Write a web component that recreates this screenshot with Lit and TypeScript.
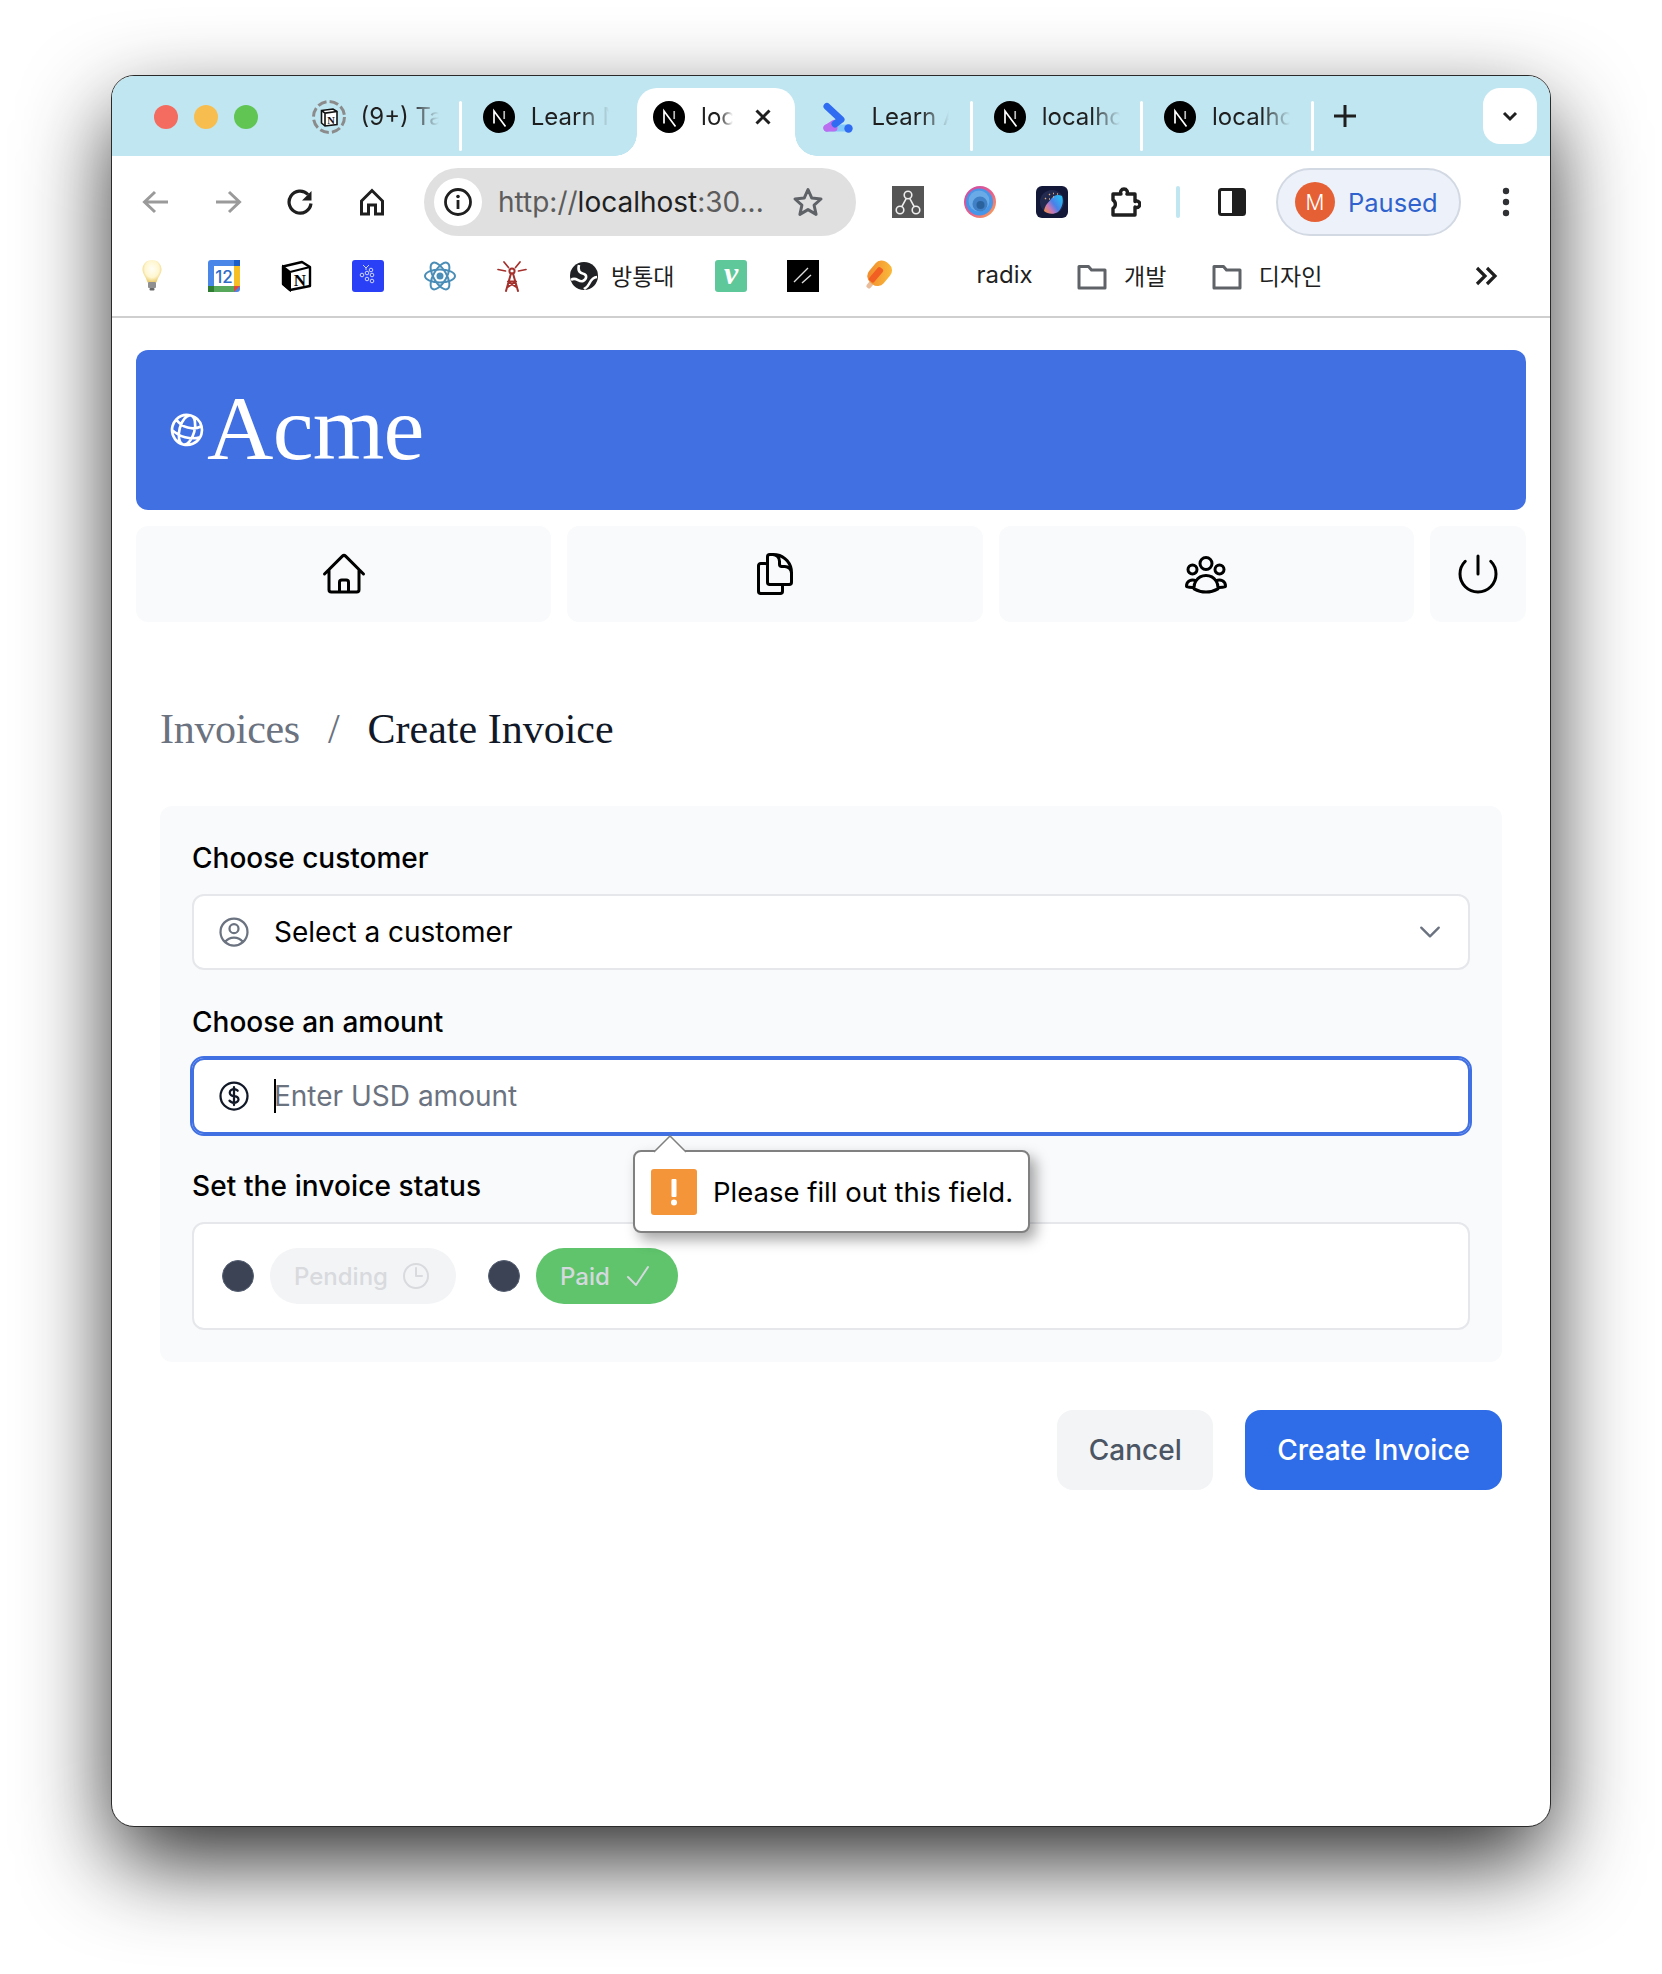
import { LitElement, html, css, svg } from "lit";
import { customElement } from "lit/decorators.js";

const icon = (size: number, box: number, body: unknown, cls = "") => html`
  <svg class=${cls} width=${size} height=${size} viewBox="0 0 ${box} ${box}" fill="none">${body}</svg>
`;

// Heroicons outline, drawn on a 24 grid
const hero = (size: number, d: string, color: string, width = 1.5) =>
  icon(size, 24, svg`<path d=${d} stroke=${color} stroke-width=${width} stroke-linecap="round" stroke-linejoin="round"/>`);

const HOME = "m2.25 12 8.954-8.955c.44-.439 1.152-.439 1.591 0L21.75 12M4.5 9.75v10.125c0 .621.504 1.125 1.125 1.125H9.75v-4.875c0-.621.504-1.125 1.125-1.125h2.25c.621 0 1.125.504 1.125 1.125V21h4.125c.621 0 1.125-.504 1.125-1.125V9.75M8.25 21h8.25";
const DOCS = "M15.75 17.25v3.375c0 .621-.504 1.125-1.125 1.125h-9.75a1.125 1.125 0 0 1-1.125-1.125V7.875c0-.621.504-1.125 1.125-1.125H6.75a9.06 9.06 0 0 1 1.5.124m7.5 10.376h3.375c.621 0 1.125-.504 1.125-1.125V11.25c0-4.46-3.243-8.161-7.5-8.876a9.06 9.06 0 0 0-1.5-.124H9.375c-.621 0-1.125.504-1.125 1.125v3.5m7.5 10.375H9.375a1.125 1.125 0 0 1-1.125-1.125v-9.25m12 6.625v-1.875a3.375 3.375 0 0 0-3.375-3.375h-1.5a1.125 1.125 0 0 1-1.125-1.125v-1.5a3.375 3.375 0 0 0-3.375-3.375H9.75";
const USERS = "M18 18.72a9.094 9.094 0 0 0 3.741-.479 3 3 0 0 0-4.682-2.72m.94 3.198.001.031c0 .225-.012.447-.037.666A11.944 11.944 0 0 1 12 21c-2.17 0-4.207-.576-5.963-1.584A6.062 6.062 0 0 1 6 18.719m12 0a5.971 5.971 0 0 0-.941-3.197m0 0A5.995 5.995 0 0 0 12 12.75a5.995 5.995 0 0 0-5.058 2.772m0 0a3 3 0 0 0-4.681 2.72 8.986 8.986 0 0 0 3.74.477m.94-3.197a5.971 5.971 0 0 0-.94 3.197M15 6.75a3 3 0 1 1-6 0 3 3 0 0 1 6 0Zm6 3a2.25 2.25 0 1 1-4.5 0 2.25 2.25 0 0 1 4.5 0Zm-13.5 0a2.25 2.25 0 1 1-4.5 0 2.25 2.25 0 0 1 4.5 0Z";
const POWER = "M5.636 5.636a9 9 0 1 0 12.728 0M12 3v9";
const USER_CIRCLE = "M17.982 18.725A7.488 7.488 0 0 0 12 15.75a7.488 7.488 0 0 0-5.982 2.975m11.963 0a9 9 0 1 0-11.963 0m11.963 0A8.966 8.966 0 0 1 12 21a8.966 8.966 0 0 1-5.982-2.275M15 9.75a3 3 0 1 1-6 0 3 3 0 0 1 6 0Z";
const DOLLAR = "M12 6v12m-3-2.818.879.659c1.171.879 3.07.879 4.242 0 1.172-.879 1.172-2.303 0-3.182C13.536 12.219 12.768 12 12 12c-.725 0-1.45-.22-2.003-.659-1.106-.879-1.106-2.303 0-3.182s2.9-.879 4.006 0l.415.33M21 12a9 9 0 1 1-18 0 9 9 0 0 1 18 0Z";
const GLOBE = "M12 21a9.004 9.004 0 0 0 8.716-6.747M12 21a9.004 9.004 0 0 1-8.716-6.747M12 21c2.485 0 4.5-4.03 4.5-9S14.485 3 12 3m0 18c-2.485 0-4.5-4.03-4.5-9S9.515 3 12 3m0 0a8.997 8.997 0 0 1 7.843 4.582M12 3a8.997 8.997 0 0 0-7.843 4.582m15.686 0A11.953 11.953 0 0 1 12 10.5c-2.998 0-5.74-1.1-7.843-2.918m15.686 0A8.959 8.959 0 0 1 21 12c0 .778-.099 1.533-.284 2.253m0 0A17.919 17.919 0 0 1 12 16.5c-3.162 0-6.133-.815-8.716-2.247m0 0A9.004 9.004 0 0 1 3 12c0-1.605.42-3.113 1.157-4.418";
const CHEVRON = "m19.5 8.25-7.5 7.5-7.5-7.5";
const CLOCK = "M12 6v6h4.5m4.5 0a9 9 0 1 1-18 0 9 9 0 0 1 18 0Z";
const CHECK = "m4.5 12.75 6 6 9-13.5";

const nextFav = icon(32, 32, svg`
  <circle cx="16" cy="16" r="16" fill="#000"/>
  <path d="M11 22.5V10l11.5 15.5" stroke="#fff" stroke-width="1.7"/>
  <path d="M21.2 10v8" stroke="#bbb" stroke-width="1.7"/>`);

const notionRingFav = icon(36, 36, svg`
  <circle cx="18" cy="18" r="15.5" stroke="#8b8b8b" stroke-width="3" stroke-dasharray="9 3.2"/>
  <path d="M10.5 11.5 22 10l4 2.5v13L14 27l-3.5-3z" fill="#fff" stroke="#111" stroke-width="1.6"/>
  <path d="M10.5 11.5l3.5 2.6V27M14 14.1l12-1.6" stroke="#111" stroke-width="1.6"/>
  <text x="20" y="24.5" font-size="10.5" font-weight="700" font-family="Liberation Serif, serif" text-anchor="middle" fill="#111">N</text>`);

const learnFav = icon(32, 32, svg`
  <path d="M4 27H25" stroke="#82c8fb" stroke-width="7" stroke-linecap="round"/>
  <path d="M4 27H11" stroke="#bb6df0" stroke-width="7" stroke-linecap="round"/>
  <path d="M4 27 11 22.5" stroke="#bb6df0" stroke-width="7" stroke-linecap="round"/>
  <path d="M4 5.5 18 18.5 12 23" stroke="#2f6cf2" stroke-width="7" stroke-linecap="round" stroke-linejoin="round"/>
  <circle cx="25.5" cy="27.5" r="4.2" fill="#2f6cf2"/>`);

const graphExt = icon(32, 32, svg`
  <rect width="32" height="32" fill="#555"/>
  <circle cx="16" cy="9" r="3.8" stroke="#eee" stroke-width="1.6"/>
  <circle cx="8" cy="24" r="3.8" stroke="#eee" stroke-width="1.6"/>
  <circle cx="24" cy="24" r="3.8" stroke="#eee" stroke-width="1.6"/>
  <path d="M14.3 12.4 9.8 20.6M17.7 12.4l4.5 8.2" stroke="#eee" stroke-width="1.6"/>`);

const orbExt = icon(32, 32, svg`
  <defs><linearGradient id="orb" x1="0" y1="0" x2="1" y2="1">
    <stop offset="0" stop-color="#c84aa8"/><stop offset=".55" stop-color="#e8608a"/><stop offset="1" stop-color="#f8b050"/>
  </linearGradient></defs>
  <circle cx="16" cy="16" r="16" fill="url(#orb)"/>
  <circle cx="15.5" cy="16" r="13.5" fill="#4595e8"/>
  <circle cx="15" cy="15" r="10.5" fill="#6aaae6"/>
  <circle cx="16" cy="18" r="7.5" fill="#3f80c6"/>
  <circle cx="16.5" cy="19" r="4" fill="#2a629e"/>`);

const waveExt = icon(32, 32, svg`
  <defs><linearGradient id="wave" x1="0" y1="1" x2="1" y2=".3">
    <stop offset="0" stop-color="#f0922c"/><stop offset=".35" stop-color="#c878b8"/><stop offset=".6" stop-color="#4a80e8"/><stop offset="1" stop-color="#2ab8f0"/>
  </linearGradient></defs>
  <rect width="32" height="32" rx="6" fill="#141838"/>
  <circle cx="16" cy="16" r="12" fill="#232a50"/>
  <path d="M8 25c1-6 4-8 7-12s7-5 11-3c2 6 0 12-4 16-5 3-10 2-14-1z" fill="url(#wave)"/>
  <path d="M9 13l1-1M13 9l1-1M17 7.500l1 0M13 13l1 0M17 11l1 0M21 8l1 0" stroke="#e0a878" stroke-width="1.300"/>`);

const puzzle = icon(32, 32, svg`
  <path d="M4 8h8a3.400 3.400 0 1 1 6 0h8v7.500a3.200 3.200 0 1 1 0 5.500V29H4v-6.500a5 5 0 0 0 0-8.500z"
    stroke="#1f1f1f" stroke-width="3.400" stroke-linejoin="round"/>`);

const sidePanel = icon(32, 32, svg`
  <rect x="3.5" y="3.5" width="25" height="25" rx="2" fill="#fff" stroke="#1f1f1f" stroke-width="3"/>
  <rect x="16" y="3.5" width="12.5" height="25" fill="#1f1f1f"/>`);

const bulb = icon(32, 32, svg`
  <defs><radialGradient id="glow" cx=".5" cy=".4" r=".58">
    <stop offset="0" stop-color="#fffef6"/><stop offset=".65" stop-color="#fff6cf"/><stop offset="1" stop-color="#eacd72"/>
  </radialGradient></defs>
  <path d="M16 0c5.500 0 9.500 4.200 9.500 9.500 0 4.500-3.500 7-5 13h-9c-1.500-6-5-8.500-5-13C6.500 4.200 10.500 0 16 0z" fill="url(#glow)"/>
  <rect x="12" y="22" width="8" height="6" rx="1" fill="#8f8f8f"/>
  <rect x="13.500" y="28" width="5" height="2.500" rx="1" fill="#666"/>`);

const calendar = icon(32, 32, svg`
  <rect width="32" height="32" rx="3" fill="#4a86e8"/>
  <rect x="26" width="6" height="6" fill="#1c5ec8"/>
  <rect x="26" y="6" width="6" height="20" fill="#f6bf26"/>
  <rect x="6" y="26" width="20" height="6" fill="#57a85a"/>
  <rect y="26" width="6" height="6" fill="#2e7d32"/>
  <path d="M26 26h6l-6 6z" fill="#e04a3a"/>
  <rect x="6" y="6" width="20" height="20" fill="#fff"/>
  <text x="16" y="22.500" font-size="17" font-family="Inter, sans-serif" font-weight="500" text-anchor="middle" fill="#2f6cc8">12</text>`);

const notion = icon(32, 32, svg`
  <path d="M3 6.500 22 2l8 5v19l-20 4-7-6z" fill="#fff" stroke="#000" stroke-width="2.400" stroke-linejoin="round"/>
  <path d="M3 6.500l7 5.500v18l-7-6zM10 12l20-5" fill="#000" stroke="#000" stroke-width="2"/>
  <text x="20" y="26" font-size="17" font-weight="700" font-family="Liberation Serif, serif" text-anchor="middle" fill="#000">N</text>`);

const grapes = icon(32, 32, svg`
  <rect width="32" height="32" rx="3" fill="#2a40f6"/>
  <g stroke="#dfe4ff" stroke-width=".9">
    <circle cx="10" cy="15" r="1.800"/><circle cx="19" cy="10" r="1.800"/><circle cx="20" cy="15" r="1.800"/>
    <circle cx="15" cy="13" r="1.800"/><circle cx="15" cy="19" r="1.800"/><circle cx="20" cy="21" r="1.800"/>
    <path d="M11 5l3 3 3-3M14 8v2"/>
  </g>`);

const atom = icon(32, 32, svg`
  <g stroke="#4a8db7" stroke-width="2">
    <ellipse cx="16" cy="16" rx="15" ry="6.500"/>
    <ellipse cx="16" cy="16" rx="15" ry="6.500" transform="rotate(60 16 16)"/>
    <ellipse cx="16" cy="16" rx="15" ry="6.500" transform="rotate(120 16 16)"/>
  </g>
  <circle cx="16" cy="16" r="3.500" fill="#4a8db7"/>`);

const tower = icon(32, 32, svg`
  <g stroke="#a4302c" stroke-width="2" stroke-linecap="round">
    <circle cx="16" cy="11" r="2.600"/>
    <path d="M15 13.500 10 31M17 13.500 22 31M12.500 21.500h7M11 27.500l9-6M21 27.500l-9-6"/>
    <path d="M8 2l4.500 5.500M24 2l-4.500 5.500M2 9.500l7.500 1.500M30 9.500l-7.500 1.500" stroke-width="1.700"/>
  </g>`);

const earth = icon(32, 32, svg`
  <circle cx="16" cy="16" r="14" fill="#202124"/>
  <path d="M3 20c5-4 8 3 12 1s4-6 1-7-7-2-5-9M29 17c-4 0-6 3-8 7s-4 4-5 5" stroke="#fff" stroke-width="2.600"/>`);

const vimeoish = html`
  <svg width="32" height="32" viewBox="0 0 32 32"><rect width="32" height="32" rx="3" fill="#5fc89b"/>
  <text x="16" y="24" font-size="32" font-style="italic" font-weight="700" font-family="Liberation Serif, serif" text-anchor="middle" fill="#fff">v</text></svg>`;

const slashes = icon(32, 32, svg`
  <rect width="32" height="32" fill="#000"/>
  <path d="M7 22 21 8M15 23l9-8" stroke="#ddd" stroke-width="1.400"/>`);

const popsicle = icon(32, 32, svg`
  <defs><linearGradient id="pop" x1="1" y1="0" x2="0" y2="1">
    <stop offset="0" stop-color="#fbbf3c"/><stop offset="1" stop-color="#f0862c"/>
  </linearGradient></defs>
  <g transform="rotate(40 18 14)">
    <rect x="15.500" y="22" width="5" height="10" rx="2" fill="#e9bd9c"/>
    <rect x="8.500" y="0" width="19" height="26" rx="8" fill="url(#pop)"/>
    <rect x="13" y="8" width="6.500" height="17" rx="2" fill="#f25f22"/>
  </g>`);

const folder = icon(32, 32, svg`
  <path d="M3 6.500h9.500l3 3.500H29v18H3z" stroke="#5f6368" stroke-width="3" stroke-linejoin="round"/>`);

const arrow = (flip: boolean) => icon(28, 28, svg`
  <path d=${flip ? "M2 14h23M15 4l10.500 10L15 24" : "M26 14H3M13 4 2.500 14 13 24"} stroke="#9a9a9a" stroke-width="3"/>`);

const reload = icon(28, 28, svg`
  <path d="M22 6.500A11 11 0 1 0 25 15.500" stroke="#1f1f1f" stroke-width="3.200"/>
  <path d="M25.500 3v9.500H16z" fill="#1f1f1f"/>`);

const toolbarHome = icon(28, 28, svg`
  <path d="M3.500 13 14 2.500 24.500 13v13h-7v-9h-7v9h-7z" stroke="#1f1f1f" stroke-width="3" stroke-linejoin="miter"/>`);

const info = icon(32, 32, svg`
  <circle cx="16" cy="16" r="12.500" stroke="#1f1f1f" stroke-width="2.800"/>
  <rect x="14.600" y="14" width="2.800" height="9" fill="#1f1f1f"/><circle cx="16" cy="10.500" r="1.800" fill="#1f1f1f"/>`);

const star = icon(32, 32, svg`
  <path d="M16 3.500l3.800 8.600 9.200.9-6.900 6.200 2 9.200-8.100-4.800-8.100 4.800 2-9.200L3 13l9.200-.9z" stroke="#5f6368" stroke-width="3" stroke-linejoin="round"/>`);

const tabs = [
  { fav: notionRingFav, title: "(9+) Ta", rule: true },
  { fav: nextFav, title: "Learn N", rule: false },
  { fav: nextFav, title: "loc", active: true, rule: false },
  { fav: learnFav, title: "Learn A", rule: true },
  { fav: nextFav, title: "localho", rule: true },
  { fav: nextFav, title: "localho", rule: true },
];

@customElement("app-root")
export class AppRoot extends LitElement {
  static styles = css`
    :host {
      display: block;
      width: 1662px;
      height: 1974px;
      background: #fff;
      font-family: Inter, "Noto Sans CJK KR", sans-serif;
      overflow: hidden;
    }
    * { box-sizing: border-box; }
    svg { display: block; flex: none; }

    .desktop { padding: 75px 111px 0; }
    .window {
      width: 1440px;
      height: 1752px;
      background: #fff;
      border: 1px solid #2a2a2a;
      border-radius: 23px;
      box-shadow: 0 36px 90px -4px rgba(0, 0, 0, 0.85);
      overflow: hidden;
    }

    /* tab strip */
    .strip {
      height: 80px;
      background: #c0e6f1;
      display: flex;
      align-items: flex-end;
      padding-left: 42px;
      padding-right: 13px;
    }
    .lights { display: flex; gap: 16px; align-self: center; margin: 2px 38.500px 0 0; }
    .light { width: 24px; height: 24px; border-radius: 50%; }
    .light.red { background: #f46c5f; }
    .light.yellow { background: #f8bd4f; }
    .light.green { background: #61c554; }
    .tab {
      position: relative;
      width: 158px;
      height: 68px;
      padding: 13px 0 0 16px;
      display: flex;
      gap: 16px;
      font-size: 24px;
      line-height: 32px;
      color: #1f1f1f;
      border-radius: 20px 20px 0 0;
      flex: none;
    }
    .tab.ring { padding-left: 14px; gap: 14px; padding-top: 11px; }
    .tab.ring .title { margin-top: 2px; }
    .tab.active { background: #fff; }
    .tab.active::before,
    .tab.active::after {
      content: "";
      position: absolute;
      bottom: 0;
      width: 22px;
      height: 22px;
    }
    .tab.active::before { left: -22px; background: radial-gradient(circle at 0 0, transparent 21.5px, #fff 22px); }
    .tab.active::after { right: -22px; background: radial-gradient(circle at 100% 0, transparent 21.5px, #fff 22px); }
    .title {
      flex: none;
      white-space: nowrap;
      height: 32px;
      -webkit-mask-image: linear-gradient(90deg, #000 50px, transparent 78px);
      mask-image: linear-gradient(90deg, #000 50px, transparent 78px);
    }
    .tab.active .title {
      -webkit-mask-image: linear-gradient(90deg, #000 18px, transparent 32px);
      mask-image: linear-gradient(90deg, #000 18px, transparent 32px);
    }
    .close { margin: 4px 20px 0 auto; }
    .rule { width: 12.300px; height: 68px; display: flex; justify-content: center; padding: 13px 0 5px; flex: none; }
    .rule i { width: 3px; background: #fff; border-radius: 2px; display: block; }
    .rule.off i { background: transparent; }
    .plus { margin: 0 0 26px 13px; }
    .more {
      margin: 0 0 12px auto;
      width: 54px;
      height: 56px;
      background: #fff;
      border-radius: 17px;
      display: flex;
      align-items: center;
      justify-content: center;
    }

    /* toolbar */
    .toolbar {
      height: 92px;
      padding: 12px 0 12px 16px;
      display: flex;
      align-items: center;
      gap: 16px;
    }
    .slot { width: 56px; height: 56px; display: flex; align-items: center; justify-content: center; flex: none; }
    .omni {
      width: 432px;
      height: 68px;
      margin-left: 8px;
      margin-right: 8px;
      background: #e0e0e0;
      border-radius: 34px;
      display: flex;
      align-items: center;
      padding: 0 32px 0 10px;
      font-size: 28px;
      color: #5c5c5c;
      white-space: nowrap;
    }
    .omni b { font-weight: 400; color: #1f1f1f; }
    .info {
      width: 48px;
      height: 48px;
      background: #fff;
      border-radius: 50%;
      display: flex;
      align-items: center;
      justify-content: center;
      margin-right: 16px;
      flex: none;
    }
    .omni .star { margin-left: auto; }
    .puzzle-slot { margin-left: 1px; margin-right: -1px; }
    .divider { width: 4px; height: 32px; background: #c0e6f1; border-radius: 2px; margin: 0 8px; flex: none; }
    .pill {
      width: 185px;
      height: 68px;
      border: 2px solid #d3d9e3;
      background: #edf2fa;
      border-radius: 34px;
      display: flex;
      align-items: center;
      gap: 13px;
      padding-left: 17px;
      color: #2f62cc;
      font-size: 25.5px;
      flex: none;
    }
    .avatar {
      width: 40px;
      height: 40px;
      border-radius: 50%;
      background: #e66035;
      color: #fff;
      font-size: 21px;
      font-weight: 300;
      display: flex;
      align-items: center;
      justify-content: center;
    }
    .kebab { margin-left: 1px; }

    /* bookmarks */
    .bookmarks {
      height: 68px;
      padding: 0 50px 12px 12px;
      display: flex;
      align-items: center;
      gap: 16px;
      font-size: 24px;
      color: #1f1f1f;
      white-space: nowrap;
    }
    .bm-text { margin-top: -3px; }
    .bm-ko { font-size: 23px; }
    .bm-label { margin-left: -17px; width: 62px; }
    .bm-v { margin-left: 14px; }
    .bm-pop { margin-left: 2px; }
    .bm-radix { margin-left: 55.500px; width: 55px; }
    .bm-folder { width: 32px; margin-left: 28.500px; }
    .bm-end { margin-left: auto; }
    .page { border-top: 2px solid #cfcfcf; padding: 32px 24px 0; }

    /* dashboard header */
    .brand {
      height: 160px;
      background: #4170e3;
      border-radius: 12px;
      display: flex;
      align-items: center;
      padding-left: 31px;
      color: #fff;
      font-family: "Liberation Serif", serif;
      font-size: 92px;
      line-height: 92px;
    }
    .globe { transform: rotate(15deg); }
    .wordmark { margin-bottom: 4px; letter-spacing: -0.8px; }
    .nav {
      display: grid;
      grid-template-columns: 1fr 1fr 1fr 96px;
      gap: 16px;
      margin-top: 16px;
    }
    .nav-item {
      height: 96px;
      background: #f9fafb;
      border-radius: 12px;
      display: flex;
      align-items: center;
      justify-content: center;
    }

    /* form */
    .content { padding: 0 24px; }
    .crumbs {
      margin-top: 79px;
      display: flex;
      font-family: "Liberation Serif", serif;
      font-size: 42px;
      line-height: 56px;
      color: #6b7280;
    }
    .crumbs .root { letter-spacing: -0.3px; }
    .crumbs .sep { margin: 0 28px; }
    .crumbs .current { color: #111827; }
    .panel {
      margin-top: 49px;
      background: #f9fafb;
      border-radius: 12px;
      padding: 32px;
    }
    .label {
      font-size: 28px;
      line-height: 40px;
      font-weight: 500;
      color: #000;
      margin-bottom: 16px;
    }
    .label.status-label { letter-spacing: 0.1px; }
    .field {
      position: relative;
      height: 76px;
      margin-bottom: 32px;
    }
    .select {
      height: 76px;
      background: #fff;
      border: 2px solid #e5e7eb;
      border-radius: 12px;
      display: flex;
      align-items: center;
      padding: 0 24px 0 22px;
      font-size: 28px;
      color: #000;
    }
    .select .value { margin-left: 22px; flex: 1; }
    .amount {
      display: block;
      width: 100%;
      height: 76px;
      border: 2px solid #4170e3;
      outline: 2px solid #4170e3;
      border-radius: 12px;
      background: #fff;
      padding: 0 16px 0 80px;
      font: 400 28px Inter, sans-serif;
      color: #111827;
    }
    .amount::placeholder { color: #6b7280; opacity: 1; }
    .field-icon { position: absolute; left: 24px; top: 20px; }
    .caret { position: absolute; left: 82px; top: 21px; width: 2px; height: 34px; background: #000; }
    .bubble {
      position: absolute;
      left: 441px;
      top: 92px;
      width: 397px;
      height: 83px;
      background: #fff;
      border: 2px solid #808080;
      border-radius: 8px;
      box-shadow: 6px 7px 14px rgba(0, 0, 0, 0.35);
      display: flex;
      align-items: center;
      padding-left: 16px;
      gap: 16px;
      z-index: 2;
      font: 400 27.5px Inter, sans-serif;
      color: #000;
      white-space: nowrap;
    }
    .bubble-arrow { position: absolute; left: 18px; top: -17px; }
    .warn {
      width: 46px;
      height: 46px;
      background: #f4953a;
      border-radius: 3px;
      display: flex;
      align-items: center;
      justify-content: center;
      flex: none;
    }
    .status {
      height: 108px;
      background: #fff;
      border: 2px solid #e5e7eb;
      border-radius: 12px;
      display: flex;
      align-items: center;
      padding-left: 28px;
    }
    .radio {
      width: 32px;
      height: 32px;
      border-radius: 50%;
      background: #3b4355;
      border: 1px solid #566072;
      margin-right: 16px;
    }
    .chip {
      height: 56px;
      border-radius: 28px;
      padding: 0 24px;
      display: flex;
      align-items: center;
      gap: 12px;
      font-size: 24px;
      font-weight: 500;
      margin-right: 32px;
    }
    .chip.pending { background: #f3f4f6; color: #d8dade; }
    .chip.paid { background: #5fc46c; color: #d4d9dd; }
    .actions { margin-top: 48px; display: flex; justify-content: flex-end; gap: 32px; }
    .btn {
      height: 80px;
      padding: 0 32px;
      border-radius: 16px;
      display: flex;
      align-items: center;
      font-size: 28px;
      font-weight: 500;
    }
    .btn.ghost { background: #f3f4f6; color: #4b5563; padding: 0 31.5px; }
    .btn.primary { background: #2f6de8; color: #fff; }
  `;

  private renderTabs() {
    return tabs.map(
      (t) => html`
        <div class="tab ${t.active ? "active" : ""} ${t.fav === notionRingFav ? "ring" : ""}">
          ${t.fav}
          <span class="title">${t.title}</span>
          ${t.active
            ? html`<div class="close">${icon(24, 24, svg`<path d="M5.5 5.5l13 13M18.5 5.5l-13 13" stroke="#1f1f1f" stroke-width="3"/>`)}</div>`
            : ""}
        </div>
        <div class="rule ${t.rule ? "" : "off"}"><i></i></div>
      `,
    );
  }

  render() {
    return html`
      <div class="desktop">
        <div class="window">
          <div class="strip">
            <div class="lights">
              <span class="light red"></span><span class="light yellow"></span><span class="light green"></span>
            </div>
            ${this.renderTabs()}
            <div class="plus">${icon(28, 28, svg`<path d="M14 3v22M3 14h22" stroke="#1f1f1f" stroke-width="3"/>`)}</div>
            <div class="more">${icon(24, 24, svg`<path d="M6 9l6 6 6-6" stroke="#1f1f1f" stroke-width="3"/>`)}</div>
          </div>

          <div class="toolbar">
            <div class="slot">${arrow(false)}</div>
            <div class="slot">${arrow(true)}</div>
            <div class="slot">${reload}</div>
            <div class="slot">${toolbarHome}</div>
            <div class="omni">
              <div class="info">${info}</div>
              <span>http://<b>localhost</b>:30...</span>
              <div class="star">${star}</div>
            </div>
            <div class="slot">${graphExt}</div>
            <div class="slot">${orbExt}</div>
            <div class="slot">${waveExt}</div>
            <div class="slot puzzle-slot">${puzzle}</div>
            <div class="divider"></div>
            <div class="slot">${sidePanel}</div>
            <div class="pill"><span class="avatar">M</span>Paused</div>
            <div class="slot kebab">
              ${icon(32, 32, svg`<g fill="#303134"><circle cx="16" cy="5" r="3.200"/><circle cx="16" cy="16" r="3.200"/><circle cx="16" cy="27" r="3.200"/></g>`)}
            </div>
          </div>

          <div class="bookmarks">
            <div class="slot">${bulb}</div>
            <div class="slot">${calendar}</div>
            <div class="slot">${notion}</div>
            <div class="slot">${grapes}</div>
            <div class="slot">${atom}</div>
            <div class="slot">${tower}</div>
            <div class="slot">${earth}</div>
            <span class="bm-text bm-ko bm-label">방통대</span>
            <div class="slot bm-v">${vimeoish}</div>
            <div class="slot">${slashes}</div>
            <div class="slot bm-pop">${popsicle}</div>
            <span class="bm-text bm-radix">radix</span>
            <div class="bm-folder">${folder}</div>
            <span class="bm-text bm-ko">개발</span>
            <div class="bm-folder">${folder}</div>
            <span class="bm-text bm-ko">디자인</span>
            <div class="bm-end">
              ${icon(28, 28, svg`<path d="M5 6l8 8-8 8M15 6l8 8-8 8" stroke="#1f1f1f" stroke-width="3.200"/>`)}
            </div>
          </div>

          <div class="page">
            <div class="brand">
              <span class="globe">${hero(40, GLOBE, "#fff", 1.6)}</span>
              <span class="wordmark">Acme</span>
            </div>
            <div class="nav">
              <div class="nav-item">${hero(48, HOME, "#000")}</div>
              <div class="nav-item">${hero(48, DOCS, "#000")}</div>
              <div class="nav-item">${hero(48, USERS, "#000")}</div>
              <div class="nav-item">${hero(48, POWER, "#000")}</div>
            </div>

            <div class="content">
              <div class="crumbs">
                <span class="root">Invoices</span><span class="sep">/</span><span class="current">Create Invoice</span>
              </div>
              <div class="panel">
                <div class="label">Choose customer</div>
                <div class="field">
                  <div class="select">
                    ${hero(36, USER_CIRCLE, "#6b7280")}
                    <span class="value">Select a customer</span>
                    ${hero(28, CHEVRON, "#6b7280", 2)}
                  </div>
                </div>
                <div class="label">Choose an amount</div>
                <div class="field">
                  <input class="amount" placeholder="Enter USD amount" />
                  <span class="field-icon">${hero(36, DOLLAR, "#111827")}</span>
                  <span class="caret"></span>
                  <div class="bubble">
                    <svg class="bubble-arrow" width="34" height="19" viewBox="0 0 34 19">
                      <path d="M1 17 17 1l16 16" fill="#fff" stroke="#808080" stroke-width="1.500"/>
                      <rect x="2" y="17" width="30" height="2" fill="#fff"/>
                    </svg>
                    <span class="warn">
                      ${icon(46, 46, svg`<rect x="20.500" y="10" width="5" height="18" rx="1" fill="#fff"/><circle cx="23" cy="33.500" r="3" fill="#fff"/>`)}
                    </span>
                    Please fill out this field.
                  </div>
                </div>
                <div class="label status-label">Set the invoice status</div>
                <div class="status">
                  <span class="radio"></span>
                  <span class="chip pending">Pending ${hero(32, CLOCK, "#d8dade")}</span>
                  <span class="radio"></span>
                  <span class="chip paid">Paid ${hero(32, CHECK, "#d4d9dd")}</span>
                </div>
              </div>
              <div class="actions">
                <div class="btn ghost">Cancel</div>
                <div class="btn primary">Create Invoice</div>
              </div>
            </div>
          </div>
        </div>
      </div>
    `;
  }
}
